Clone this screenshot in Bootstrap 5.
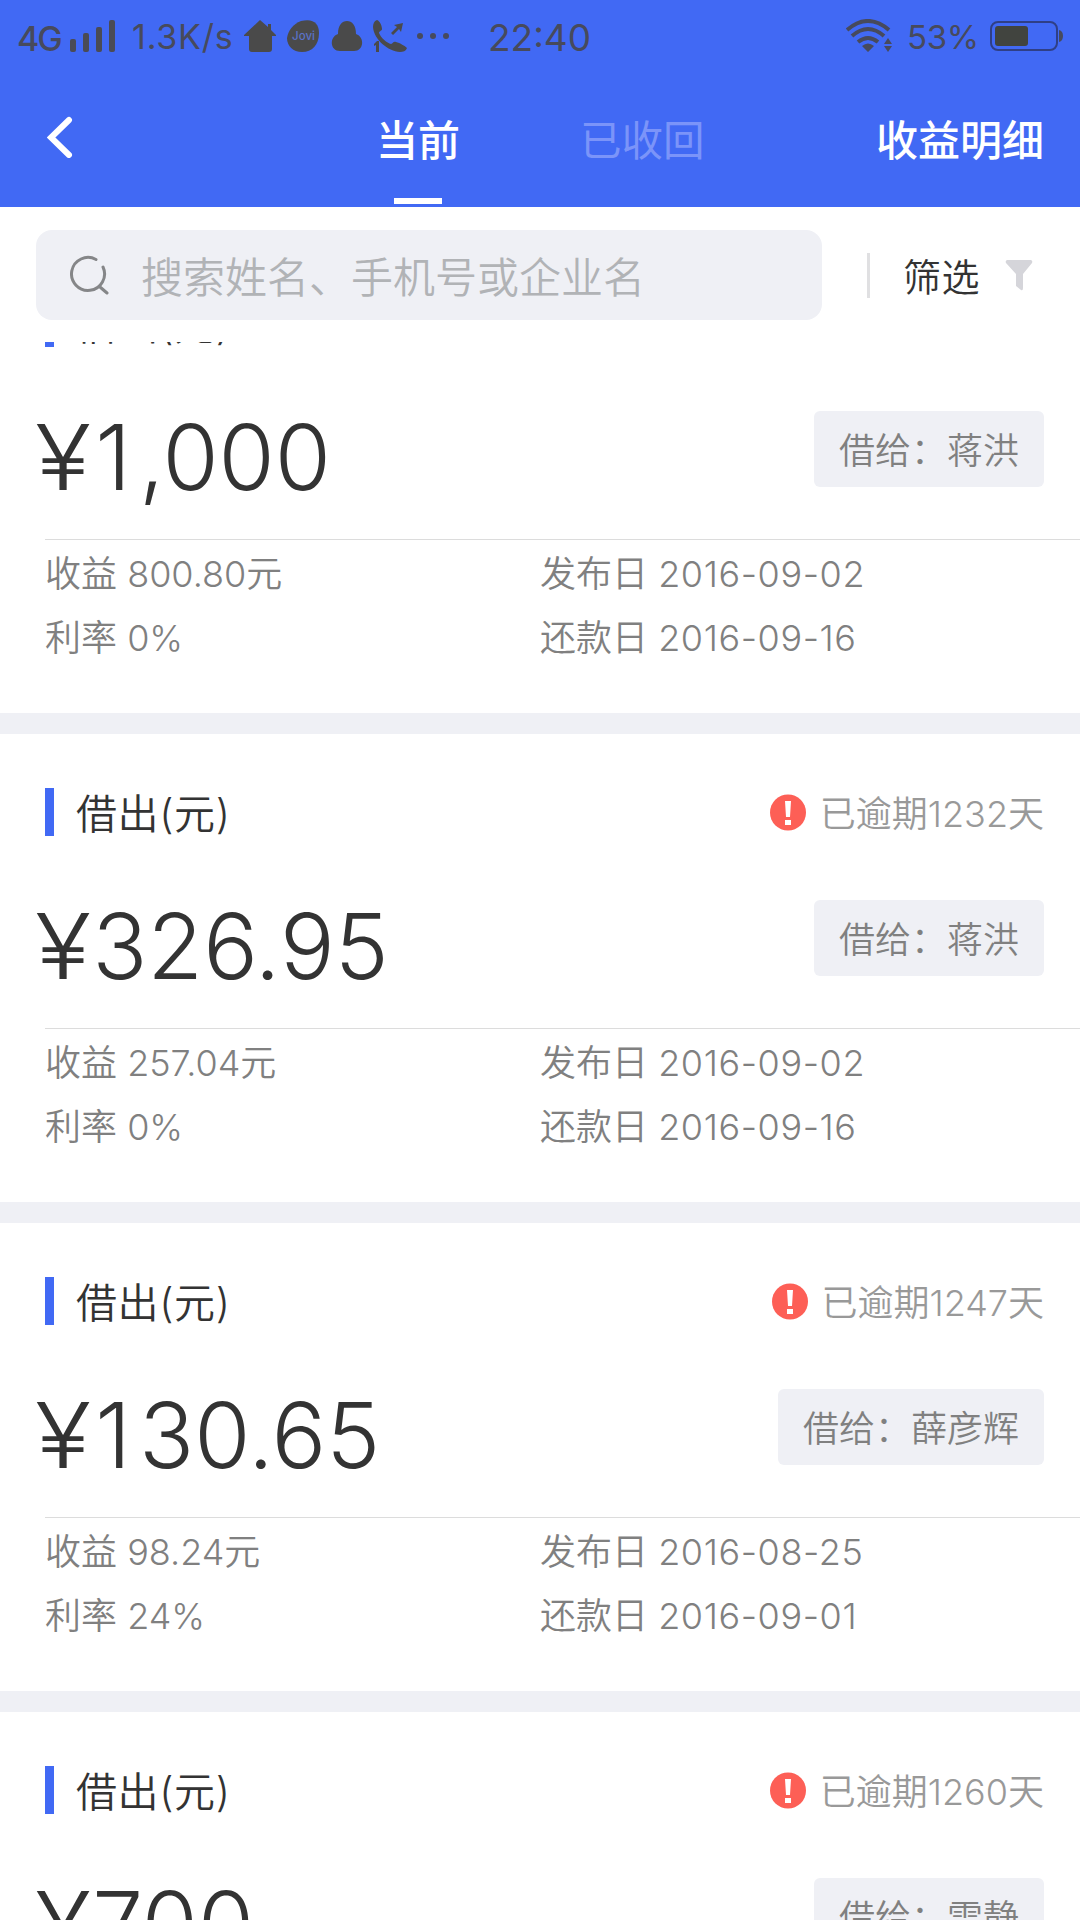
<!DOCTYPE html>
<html lang="zh-CN">
<head>
<meta charset="utf-8">
<meta name="viewport" content="width=device-width, initial-scale=1">
<title>借出</title>
<link href="https://cdn.jsdelivr.net/npm/bootstrap@5.3.0/dist/css/bootstrap.min.css" rel="stylesheet">
<style>
  body { font-family: Inter, "Noto Sans CJK SC", sans-serif; background: #fff; color: #333; font-weight: 350; }
  svg { display: block; flex: none; }
  .screen { width: 1080px; height: 1920px; }
  .app-head { background: #4169f4; height: 207px; }
  .status { height: 62px; padding: 11px 17px 0 17px; color: #474a5c; font-weight: 400; line-height: 52px; }
  .status .net { font-size: 34px; line-height: 56px; font-weight: 500; letter-spacing: -2px; width: 53px; }
  .status .speed { font-size: 34px; width: 112px; letter-spacing: .8px; }
  .status .clock { font-size: 37px; margin-left: 38px; line-height: 54px; }
  .status .pct { font-size: 33px; width: 83px; margin-left: 15px; letter-spacing: -.4px; }
  .tabs { height: 145px; color: #fff; font-size: 42px; line-height: 60px; font-weight: 500; padding: 0 36px 0 47px; }
  .tabs .tab { padding-top: 49px; height: 145px; }
  .tabs .tab::after { content: ""; width: 48px; height: 6px; margin-top: 27px; }
  .tabs .tab.on::after { background: #fff; }
  .tabs .t-now { margin-left: 302px; }
  .tabs .t-back { margin-left: 120px; color: #7b94f9; font-weight: 400; font-size: 41.5px; }
  .finder { height: 135px; padding: 23px 47px 22px 36px; }
  .finder .field { width: 786px; height: 90px; border-radius: 16px; background: #eff0f5; padding-left: 34px; color: #b1b3b6; font-size: 42px; }
  .finder .field span { padding: 4px 0 0 7px; }
  .finder .rule { width: 3px; height: 45px; background: #e0e0e2; margin-left: 45px; }
  .finder .pick { font-size: 38px; margin-left: 33px; padding-top: 4px; letter-spacing: .5px; }
  .loans { height: 1578px; }
  .loan { height: 489px; border-bottom: 21px solid #eff0f5; padding-top: 54px; }
  .loan:first-child { margin-top: -97px; }
  .loan-top { height: 52px; padding: 0 36px 0 45px; }
  .loan-top .bar { width: 9px; height: 48px; background: #4169f4; margin-right: 22px; }
  .loan-top .name { font-size: 41px; line-height: 53px; letter-spacing: .6px; }
  .loan-top .late { font-size: 36px; line-height: 53px; color: #999; }
  .loan-top .late svg { margin: 6px 14px 0 0; }
  .loan-mid { height: 188px; padding: 60px 36px 0 35px; }
  .loan-mid .sum { font-size: 91px; line-height: 92px; font-weight: 300; }
  .loan-mid .yen { display: inline-block; transform: scaleX(1.14); transform-origin: left; margin-right: 8px; }
  .loan-mid .one { margin: 0 8px 0 3px; }
  .loan-mid .who { height: 76px; line-height: 81px; padding: 0 25px; border-radius: 6px; background: #eff0f5; color: #808080; font-size: 36px; }
  .loan-info { margin-left: 45px; border-top: 1px solid #dcdcdc; padding-top: 2px; font-size: 36px; line-height: 64px; color: #808080; }
  .loan-info > div { width: 495px; }
  .loan-info .day { letter-spacing: .6px; }
</style>
</head>
<body>
<div class="screen d-flex flex-column overflow-hidden">
  <header class="app-head">
    <div class="status d-flex">
      <span class="net">4G</span>
      <svg width="46" height="34" viewBox="0 0 46 34" class="mt-2 me-3" fill="#4a4b55"><rect y="20" width="6" height="13" rx="2"/><rect x="13" y="14" width="6" height="19" rx="2"/><rect x="26" y="8" width="6" height="25" rx="2"/><rect x="39" y="1" width="6" height="32" rx="2"/></svg>
      <span class="speed">1.3K/s</span>
      <svg width="164" height="34" viewBox="0 0 164 34" class="mt-2" fill="#4a4a4a">
        <path d="M16 1 24 8V5h3v6l5 5v1h-4v13q0 3-3 3H8q-3 0-3-3V17H0v-1z"/>
        <path d="M57 2C69-1 75 4 75 14c0 12-7 19-17 19-9 0-15-6-15-14C44 12 49 5 57 2z"/>
        <text x="59.500" y="21" text-anchor="middle" font-size="11.500" font-weight="500" fill="#5b72c6" font-family="Inter">Jovi</text>
        <path d="M94 15C94 6 98 2 103 2s9 4 9 13c9 3 8 17-2 17H96c-10 0-11-14-2-17z"/>
        <path d="M133 1c3 1 5 6 5 9 0 2-3 2-3 4 2 5 8 10 12 11 2 0 2-3 5-2 4 1 9 4 11 6-1 3-4 4-7 4-12-1-26-12-27-25 0-3 1-6 4-7z"/>
        <path d="m149 16-2-2 6-6-3-2 9-2-2 9-2-3z"/>
        <path d="M133 22h2v11h-3v-7l-2 1v-2z"/>
      </svg>
      <svg width="34" height="34" viewBox="0 0 34 34" class="mt-2 ms-2" fill="#474a5c"><circle cx="4" cy="17" r="3"/><circle cx="17" cy="17" r="3"/><circle cx="30" cy="17" r="3"/></svg>
      <span class="clock">22:40</span>
      <svg width="46" height="34" viewBox="0 0 46 34" class="mt-2 ms-auto" fill="none" stroke="#474a5c" stroke-width="4"><path d="M1 11Q22-7 43 11M6 17q16-14 32 0M12 23q10-8 20 0"/><path d="m22 33-6-6q6-5 12 0zM42 19l4 6h-8zm0 14 4-6h-8z" fill="#474a5c" stroke="none"/></svg>
      <span class="pct">53%</span>
      <svg width="73" height="34" viewBox="0 0 73 34" class="mt-2"><rect x="1" y="3" width="66" height="28" rx="7" fill="none" stroke="#2f3f86" stroke-width="2"/><rect x="5" y="7" width="33" height="20" rx="3" fill="#41443f"/><path d="M69 11q4 1 4 6t-4 6z" fill="#474a5c"/></svg>
    </div>
    <nav class="tabs d-flex">
      <svg width="27" height="43" viewBox="0 0 27 43" class="align-self-center mt-1" fill="none" stroke="#fff" stroke-width="6" stroke-linecap="round"><path d="M22 5 4 22.500 22 40"/></svg>
      <div class="tab on t-now d-flex flex-column align-items-center">当前</div>
      <div class="tab t-back d-flex flex-column align-items-center">已收回</div>
      <div class="tab ms-auto d-flex flex-column align-items-center">收益明细</div>
    </nav>
  </header>

  <div class="finder d-flex align-items-center">
    <div class="field d-flex align-items-center">
      <svg width="40" height="40" viewBox="0 0 40 40" class="me-4" fill="none" stroke="#858688" stroke-width="3" stroke-linecap="round"><path d="M26 4.500A16.500 16.500 0 1 0 33 12M30 32l7 6"/></svg>
      <span>搜索姓名、手机号或企业名</span>
    </div>
    <div class="rule"></div>
    <span class="pick">筛选</span>
    <svg width="28" height="32" viewBox="0 0 28 32" class="ms-auto" fill="#d5d5da"><path d="M2 1h24q2 1 1 3l-9 11v14q0 3-2 2l-5-4V15L1 4Q0 2 2 1z"/></svg>
  </div>

  <main class="loans overflow-hidden">
    <section class="loan">
      <div class="loan-top d-flex"><div class="bar"></div><span class="name">借出(元)</span></div>
      <div class="loan-mid d-flex justify-content-between"><span class="sum"><span class="yen">¥</span><span class="one">1</span>,000</span><span class="who">借给：蒋洪</span></div>
      <div class="loan-info d-flex"><div>收益 800.80元<br>利率 0%</div><div>发布日 <span class="day">2016-09-02</span><br>还款日 <span class="day">2016-09-16</span></div></div>
    </section>
    <section class="loan">
      <div class="loan-top d-flex"><div class="bar"></div><span class="name">借出(元)</span>
        <span class="late d-flex ms-auto"><svg width="36" height="37" viewBox="0 0 36 37"><circle cx="18" cy="18.500" r="18" fill="#fd5f56"/><path d="M15 7h6l-1 16h-4zM15 26h6v5h-6z" fill="#fff"/></svg>已逾期1232天</span></div>
      <div class="loan-mid d-flex justify-content-between"><span class="sum"><span class="yen">¥</span>326.95</span><span class="who">借给：蒋洪</span></div>
      <div class="loan-info d-flex"><div>收益 257.04元<br>利率 0%</div><div>发布日 <span class="day">2016-09-02</span><br>还款日 <span class="day">2016-09-16</span></div></div>
    </section>
    <section class="loan">
      <div class="loan-top d-flex"><div class="bar"></div><span class="name">借出(元)</span>
        <span class="late d-flex ms-auto"><svg width="36" height="37" viewBox="0 0 36 37"><circle cx="18" cy="18.500" r="18" fill="#fd5f56"/><path d="M15 7h6l-1 16h-4zM15 26h6v5h-6z" fill="#fff"/></svg>已逾期1247天</span></div>
      <div class="loan-mid d-flex justify-content-between"><span class="sum"><span class="yen">¥</span><span class="one">1</span>30.65</span><span class="who">借给：薛彦辉</span></div>
      <div class="loan-info d-flex"><div>收益 98.24元<br>利率 24%</div><div>发布日 <span class="day">2016-08-25</span><br>还款日 <span class="day">2016-09-01</span></div></div>
    </section>
    <section class="loan">
      <div class="loan-top d-flex"><div class="bar"></div><span class="name">借出(元)</span>
        <span class="late d-flex ms-auto"><svg width="36" height="37" viewBox="0 0 36 37"><circle cx="18" cy="18.500" r="18" fill="#fd5f56"/><path d="M15 7h6l-1 16h-4zM15 26h6v5h-6z" fill="#fff"/></svg>已逾期1260天</span></div>
      <div class="loan-mid d-flex justify-content-between"><span class="sum"><span class="yen">¥</span>700</span><span class="who">借给：雷静</span></div>
    </section>
  </main>
</div>
<script src="https://cdn.jsdelivr.net/npm/bootstrap@5.3.0/dist/js/bootstrap.bundle.min.js"></script>
</body>
</html>
